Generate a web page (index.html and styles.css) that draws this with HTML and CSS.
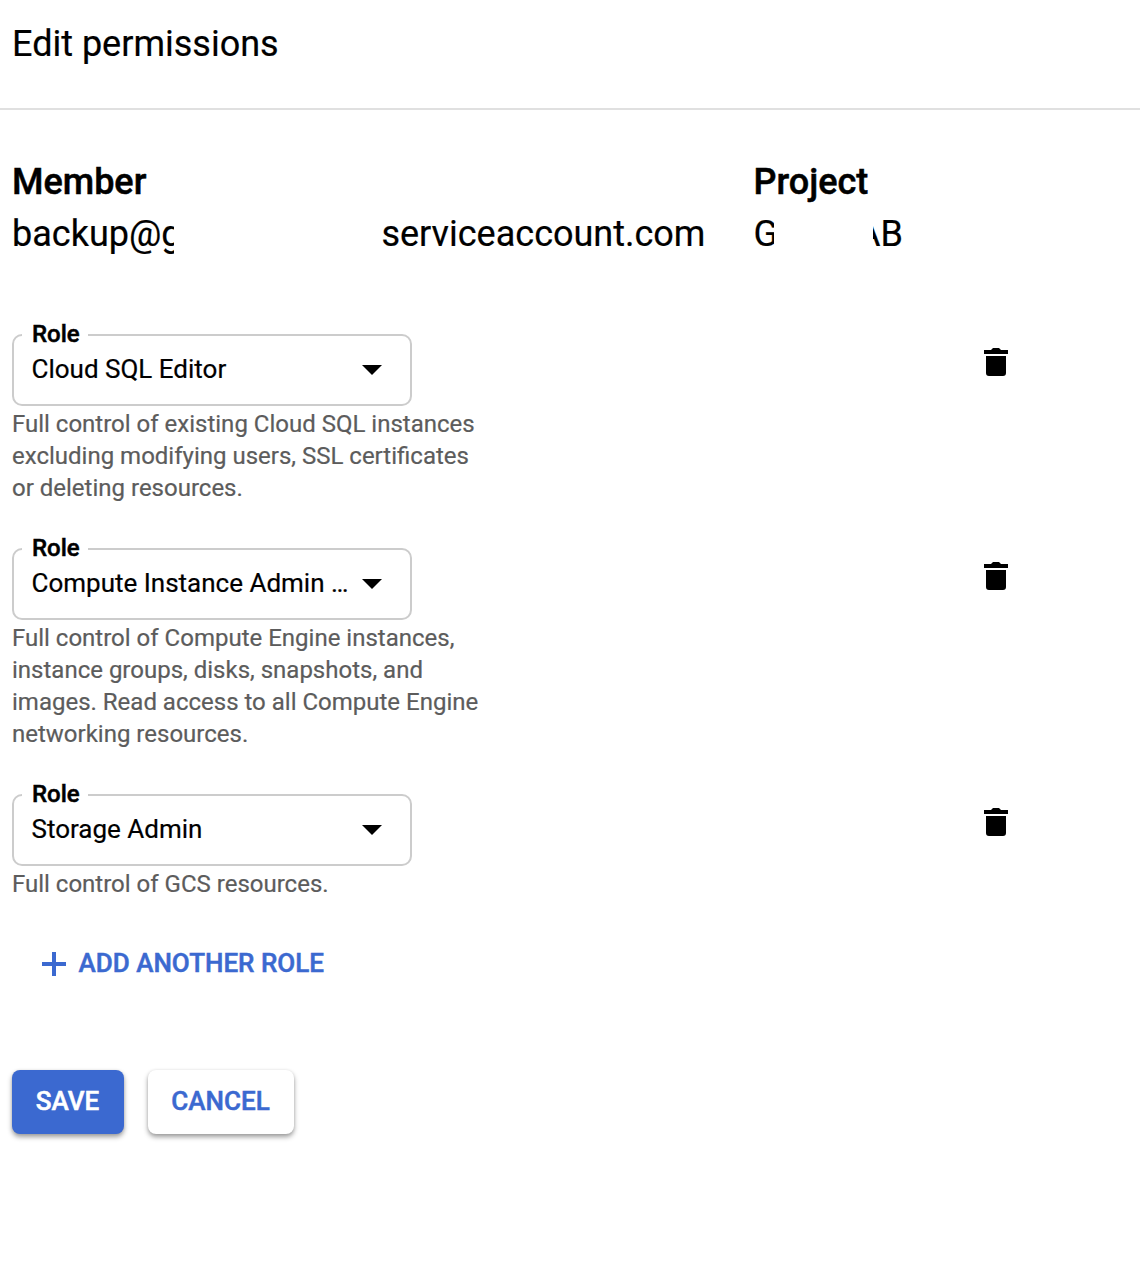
FILE: index.html
```html
<!DOCTYPE html>
<html lang="en">
<head>
<meta charset="utf-8">
<title>Edit permissions</title>
<link rel="stylesheet" href="styles.css">
</head>
<body>
<svg class="symbols" aria-hidden="true">
  <symbol id="trash" viewBox="0 0 24 28"><path d="M7 2L9 0h6l2 2h7v4H0V2zM2 8h20v17a3 3 0 0 1-3 3H5a3 3 0 0 1-3-3z"/></symbol>
  <symbol id="caret" viewBox="0 0 20 10"><path d="M0 0h20L10 10z"/></symbol>
</svg>
<header class="header"><h1 class="title">Edit permissions</h1></header>
<main class="content">
  <section class="summary">
    <div class="member">
      <h2 class="heading">Member</h2>
      <div class="value"><span class="account-start">backup@g</span><span class="account-end">serviceaccount.com</span></div>
    </div>
    <div class="project">
      <h2 class="heading">Project</h2>
      <div class="value"><span class="project-start">G</span><span class="project-end"><span>AB</span></span></div>
    </div>
  </section>
  <section class="roles">
    <div class="role">
      <div class="role-main">
        <fieldset class="select"><legend class="label">Role</legend><div class="selected"><span class="name">Cloud SQL Editor</span><svg class="caret"><use href="#caret"/></svg></div></fieldset>
        <p class="hint">Full control of existing Cloud SQL instances<br>excluding modifying users, SSL certificates<br>or deleting resources.</p>
      </div>
      <svg class="trash"><use href="#trash"/></svg>
    </div>
    <div class="role">
      <div class="role-main">
        <fieldset class="select"><legend class="label">Role</legend><div class="selected"><span class="name">Compute Instance Admin …</span><svg class="caret"><use href="#caret"/></svg></div></fieldset>
        <p class="hint">Full control of Compute Engine instances,<br>instance groups, disks, snapshots, and<br>images. Read access to all Compute Engine<br>networking resources.</p>
      </div>
      <svg class="trash"><use href="#trash"/></svg>
    </div>
    <div class="role">
      <div class="role-main">
        <fieldset class="select"><legend class="label">Role</legend><div class="selected"><span class="name">Storage Admin</span><svg class="caret"><use href="#caret"/></svg></div></fieldset>
        <p class="hint">Full control of GCS resources.</p>
      </div>
      <svg class="trash"><use href="#trash"/></svg>
    </div>
  </section>
  <button class="add"><svg class="plus" viewBox="0 0 24 24"><path d="M10 0h4v10h10v4H14v10h-4V14H0v-4h10z"/></svg><span>ADD ANOTHER ROLE</span></button>
  <div class="actions">
    <button class="button save">SAVE</button>
    <button class="button cancel">CANCEL</button>
  </div>
</main>
</body>
</html>
```
FILE: styles.css
```css
* { box-sizing: border-box; }
body { margin: 0; min-height: 1274px; background: #fff; color: #000; font-family: Roboto, sans-serif; -webkit-text-stroke: .2px; }
h1, h2, p { margin: 0; }
svg { display: block; fill: currentColor; flex: none; }
button { border: 0; margin: 0; font: 500 26px/32px Roboto, sans-serif; cursor: pointer; }
.symbols { display: none; }
.header { height: 110px; padding: 23px 12px 0; border-bottom: 2px solid #e0e0e0; }
.title { font-size: 36px; line-height: 42px; font-weight: 400; }
.content { padding: 46px 12px 0; }
.summary { display: flex; height: 165px; }
.member { width: 741.5px; }
.heading { font-size: 36px; line-height: 52px; font-weight: 500; }
.heading, .label, button { -webkit-text-stroke: .5px; }
.value { display: flex; font-size: 36px; line-height: 52px; white-space: nowrap; }
.account-start { width: 162px; margin-right: 207.4px; overflow: hidden; }
.project-start { width: 20.5px; margin-right: 99px; overflow: hidden; }
.project-end { width: 30px; display: flex; justify-content: flex-end; overflow: hidden; }
.role { display: flex; justify-content: space-between; width: 996px; margin-bottom: 31px; }
.role-main { width: 500px; }
.select { width: 400px; height: 85px; min-width: 0; margin: 0; padding: 0 28px 0 17.5px; border: 2px solid #ccc; border-radius: 10px; }
.label { height: 28px; margin-left: -9.5px; padding: 0 8px 0 10px; font-size: 24px; line-height: 26px; font-weight: 500; }
.selected { display: flex; align-items: center; justify-content: space-between; height: 40px; }
.name { font-size: 26px; line-height: 40px; white-space: nowrap; }
.caret { width: 20px; height: 10px; margin-top: 1px; }
.hint { padding-top: 2px; font-size: 24px; line-height: 32px; color: #5c5c5c; white-space: nowrap; }
.trash { width: 24px; height: 28px; margin-top: 27px; }
.add { display: flex; align-items: center; gap: 12.5px; margin: 47px 0 0 30px; padding: 0; background: none; color: #3b69d0; }
.plus { width: 24px; height: 24px; margin-top: 2px; }
.actions { display: flex; gap: 24px; margin-top: 91px; }
.button { height: 64px; padding: 0 1px 2px 0; border-radius: 8px; box-shadow: 0 3px 5px rgba(0,0,0,.38), 0 0 3px rgba(0,0,0,.08); }
.save { width: 112px; background: #3b69d0; color: #fff; }
.cancel { width: 146px; background: #fff; color: #3b69d0; }
```
